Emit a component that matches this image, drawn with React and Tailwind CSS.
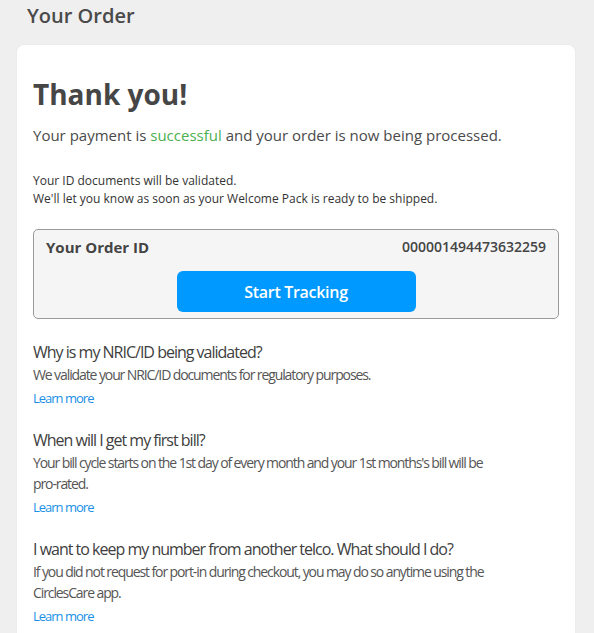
const faqs = [
  {
    q: "Why is my NRIC/ID being validated?",
    a: "We validate your NRIC/ID documents for regulatory purposes."
  },
  {
    q: "When will I get my first bill?",
    a: "Your bill cycle starts on the 1st day of every month and your 1st months's bill will be pro-rated."
  },
  {
    q: "I want to keep my number from another telco. What should I do?",
    a: "If you did not request for port-in during checkout, you may do so anytime using the CirclesCare app."
  }
];

const App = () => {
  return (
    <div
      className="min-h-screen bg-[#efefef] text-[#4a4a4a]"
      style={{ fontFamily: '"Open Sans", sans-serif' }}
    >
      <h1 className="pl-[27px] pt-[2px] text-[20px] leading-[28px] font-semibold text-[#4a4a4a]">
        Your Order
      </h1>

      <div className="ml-[17px] mt-[15px] w-[558px] rounded-t-[7px] bg-white px-4 pt-[32px] pb-12 shadow-[0_0_2px_rgba(0,0,0,0.06)]">
        <h2 className="text-[28px] leading-[34px] font-bold text-[#464646]">Thank you!</h2>
        <p className="mt-[14px] text-[15px] leading-[20px]">
          Your payment is <span className="text-[#4caf50]">successful</span> and your order is now
          being processed.
        </p>

        <div className="mt-[27px] text-[12px] leading-[18px] text-[#333]">
          <p>Your ID documents will be validated.</p>
          <p>We'll let you know as soon as your Welcome Pack is ready to be shipped.</p>
        </div>

        {/* Order ID box */}
        <div className="mt-[21px] rounded-[5px] border border-[#9a9a9a] bg-[#f5f5f5] px-3 pt-[6px] pb-[6px]">
          <div className="flex items-center justify-between">
            <span className="text-[15px] leading-[22px] font-bold text-[#444]">Your Order ID</span>
            <span className="text-[14px] leading-[22px] font-semibold text-[#444]">
              000001494473632259
            </span>
          </div>
          <div className="mt-[13px] flex justify-center">
            <button className="h-[41px] w-[239px] rounded-[6px] bg-[#0099ff] text-[16px] font-semibold tracking-[-0.3px] text-white">
              Start Tracking
            </button>
          </div>
        </div>

        {/* FAQ */}
        <div className="mt-[21px] flex flex-col gap-[19px] pr-[52px]">
          {faqs.map((f) => (
            <div key={f.q}>
              <h3 className="text-[16px] leading-[24px] tracking-[-1px] text-[#404040]">{f.q}</h3>
              <p className="text-[14px] leading-[21px] tracking-[-1.1px] text-[#555]">{f.a}</p>
              <a
                href="#"
                className="mt-[3px] block text-[13px] leading-[21px] tracking-[-1px] text-[#1a8fe6]"
              >
                Learn more
              </a>
            </div>
          ))}
        </div>
      </div>
    </div>
  );
};

export default App;
